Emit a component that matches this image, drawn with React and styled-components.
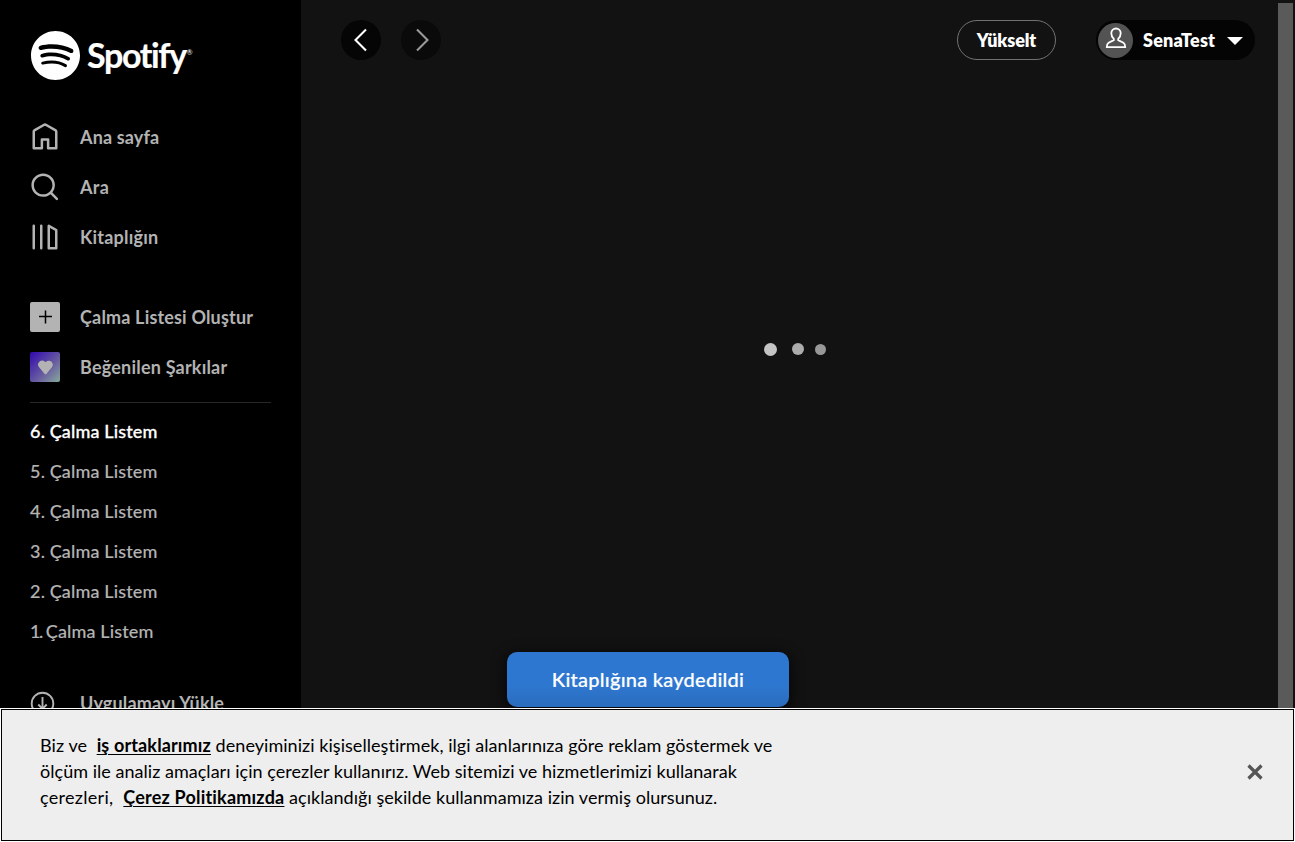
import React from "react";
import styled, { createGlobalStyle } from "styled-components";

const Global = createGlobalStyle`
  * { box-sizing: border-box; }
  body {
    margin: 0;
    background: #000;
    overflow: hidden;
    font-family: Lato, "Liberation Sans", sans-serif;
    font-variant-ligatures: none;
  }
  button { font-variant-ligatures: none; }
`;

const Page = styled.div`
  display: grid;
  grid-template-columns: 301px 1fr;
  grid-template-rows: 708px 134px;
  width: 1295px;
  height: 842px;
  overflow: hidden;
`;

const Sidebar = styled.aside`
  display: flex;
  flex-direction: column;
  min-height: 0;
  overflow: hidden;
  background: #000;
  padding: 31px 30px 0;
`;

const Text = styled.span`
  white-space: pre;
  letter-spacing: ${(p) => p.$ls || 0}px;
`;

const Brand = styled.div`
  display: flex;
  align-items: center;
  height: 49px;
  padding-left: 1px;
  margin-bottom: 42px;
  color: #fff;
`;

const Wordmark = styled.span`
  margin: -2px 0 0 7px;
  font-size: 34px;
  line-height: 40px;
  font-weight: 700;
  letter-spacing: -1.35px;
  -webkit-text-stroke: 0.2px currentColor;
`;

const Registered = styled.span`
  font-size: 7px;
  margin: -7px 0 0 1px;
`;

const NavList = styled.nav`
  display: flex;
  flex-direction: column;
  margin-bottom: ${(p) => p.$after || 0}px;
`;

const NavItem = styled.a`
  display: flex;
  align-items: center;
  gap: 20px;
  height: 50px;
  padding-bottom: 20px;
  color: #b3b3b3;
  font-size: 18px;
  font-weight: 700;
  svg { flex: none; }
`;

const Tile = styled.span`
  display: grid;
  place-items: center;
  flex: none;
  width: 30px;
  height: 30px;
  border-radius: 2px;
  background: ${(p) => p.$bg};
`;

const Divider = styled.hr`
  width: 241px;
  height: 1px;
  margin: 0 0 8px;
  border: 0;
  background: #282828;
  flex: none;
`;

const Playlist = styled.a`
  height: 40px;
  line-height: 40px;
  flex: none;
  font-size: 18px;
  font-weight: 500;
  -webkit-text-stroke: ${(p) => (p.$active ? 0.3 : 0.15)}px currentColor;
  color: ${(p) => (p.$active ? "#fff" : "#b3b3b3")};
`;

const Install = styled.a`
  display: flex;
  align-items: center;
  gap: 25px;
  flex: none;
  height: 30px;
  margin-top: 37px;
  color: #b3b3b3;
  font-size: 18px;
  font-weight: 700;
`;

const Main = styled.main`
  display: grid;
  grid-template-columns: 977px 15px 2px;
  min-height: 0;
  background: #121212;
`;

const Content = styled.section`
  display: flex;
  flex-direction: column;
  align-items: center;
`;

const ScrollThumb = styled.div`
  margin-top: 3px;
  background: #5a5a5a;
`;

const TopBar = styled.header`
  display: flex;
  align-items: center;
  align-self: stretch;
  height: 80px;
  padding: 0 23px 0 40px;
`;

const RoundButton = styled.button`
  display: grid;
  place-items: center;
  width: 40px;
  height: 40px;
  margin-right: 20px;
  padding: 0;
  border: 0;
  border-radius: 50%;
  background: ${(p) => (p.$dim ? "#0a0a0a" : "#050505")};
  color: ${(p) => (p.$dim ? "#9a9a9a" : "#fff")};
`;

const Upgrade = styled.button`
  width: 99px;
  height: 40px;
  margin-left: auto;
  padding: 0 0 1px;
  border: 1px solid #727272;
  border-radius: 20px;
  background: transparent;
  color: #fff;
  font-family: Lato, sans-serif;
  font-weight: 800;
  font-size: 18px;
`;

const UserMenu = styled.button`
  display: flex;
  align-items: center;
  width: 159px;
  height: 40px;
  margin-left: 40px;
  padding: 0 12px 0 2px;
  border: 0;
  border-radius: 20px;
  background: #040404;
  color: #fff;
  font-family: Lato, sans-serif;
  font-weight: 800;
  font-size: 18px;
`;

const Avatar = styled.span`
  display: grid;
  place-items: center;
  width: 35px;
  height: 35px;
  margin-right: 10px;
  padding-bottom: 4px;
  border-radius: 50%;
  background: #535353;
`;

const Caret = styled.svg`
  margin: 1px 0 0 auto;
`;

const Loader = styled.div`
  display: flex;
  align-items: center;
  height: 14px;
  margin-top: 262px;
  margin-left: 11px;
`;

const Dot = styled.span`
  width: ${(p) => p.$size}px;
  height: ${(p) => p.$size}px;
  margin-right: ${(p) => p.$gap || 0}px;
  border-radius: 50%;
  background: ${(p) => p.$color};
`;

const Toast = styled.div`
  position: absolute;
  left: 507px;
  top: 652px;
  display: grid;
  place-items: center;
  width: 282px;
  height: 55px;
  padding-bottom: 1px;
  border-radius: 10px;
  background: linear-gradient(#2e77d0 60%, #2a6cbd);
  box-shadow: 0 4px 12px 4px rgba(0, 0, 0, 0.5);
  color: #fff;
  font-size: 20px;
  font-weight: 500;
  -webkit-text-stroke: 0.2px currentColor;
`;

const CookieBanner = styled.section`
  position: relative;
  grid-column: 1 / -1;
  display: flex;
  align-items: center;
  justify-content: space-between;
  margin: 1px;
  padding: 0 30px 7px 38px;
  border: 1px solid #000;
  outline: 1px solid #fff;
  background: #eee;
  color: #000;
`;

const CookieText = styled.p`
  margin: 0 0 2px;
  font-size: 18px;
  line-height: 26px;
`;

const Line = styled.span`
  display: block;
  white-space: pre;
`;

const CookieLink = styled.a`
  font-weight: 700;
  letter-spacing: ${(p) => p.$ls}px;
  text-decoration: underline;
  text-decoration-thickness: 1px;
  text-underline-offset: 2px;
`;

const CloseIcon = styled.svg`
  display: block;
  margin-top: 1px;
`;

const Icon = ({ d, size = 30, box = 24 }) => (
  <svg width={size} height={size} viewBox={`0 0 ${box} ${box}`} fill="currentColor">
    <path d={d} />
  </svg>
);

const paths = {
  logo: "M12 0C5.4 0 0 5.4 0 12s5.4 12 12 12 12-5.4 12-12S18.66 0 12 0zm5.521 17.34c-.24.359-.66.48-1.021.24-2.82-1.74-6.36-2.101-10.561-1.141-.418.122-.779-.179-.899-.539-.12-.421.18-.78.54-.9 4.56-1.021 8.52-.6 11.64 1.32.42.18.479.659.301 1.02zm1.44-3.3c-.301.42-.841.6-1.262.3-3.239-1.98-8.159-2.58-11.939-1.38-.479.12-1.02-.12-1.14-.6-.12-.48.12-1.021.6-1.141C9.6 9.9 15 10.561 18.72 12.84c.361.181.54.78.241 1.2zm.12-3.36C15.24 8.4 8.82 8.16 5.16 9.301c-.6.179-1.2-.181-1.38-.721-.18-.601.18-1.2.72-1.381 4.26-1.26 11.28-1.02 15.721 1.621.539.3.719 1.02.419 1.56-.299.421-1.02.599-1.559.3z",
  home: "M12.5 3.247a1 1 0 00-1 0L4 7.577V20h4.5v-6a1 1 0 011-1h5a1 1 0 011 1v6H20V7.577l-7.5-4.33zm-2-1.732a3 3 0 013 0l7.5 4.33a2 2 0 011 1.732V21a1 1 0 01-1 1h-6.5a1 1 0 01-1-1v-6h-3v6a1 1 0 01-1 1H3a1 1 0 01-1-1V7.577a2 2 0 011-1.732l7.5-4.33z",
  search: "M10.533 1.279c-5.18 0-9.407 4.14-9.407 9.279s4.226 9.279 9.407 9.279c2.234 0 4.29-.77 5.907-2.058l4.353 4.353a1 1 0 101.414-1.414l-4.344-4.344a9.157 9.157 0 002.077-5.816c0-5.14-4.226-9.28-9.407-9.28zm-7.407 9.279c0-4.006 3.302-7.28 7.407-7.28s7.407 3.274 7.407 7.28-3.302 7.279-7.407 7.279-7.407-3.273-7.407-7.28z",
  library: "M14.5 2.134a1 1 0 011 0l6 3.464a1 1 0 01.5.866V21a1 1 0 01-1 1h-6a1 1 0 01-1-1V3a1 1 0 01.5-.866zM16 4.732V20h4V7.041l-4-2.309zM3 22a1 1 0 01-1-1V3a1 1 0 012 0v18a1 1 0 01-1 1zm6 0a1 1 0 01-1-1V3a1 1 0 012 0v18a1 1 0 01-1 1z",
  heart: "M15.724 4.22A4.313 4.313 0 0012.192.814a4.269 4.269 0 00-3.622 1.13.837.837 0 01-1.14 0 4.272 4.272 0 00-6.21 5.855l5.916 7.05a1.128 1.128 0 001.727 0l5.916-7.05a4.228 4.228 0 00.945-3.577z",
};

export default function App() {
  return (
    <Page>
      <Global />
      <Sidebar>
        <Brand>
          <Icon d={paths.logo} size={49} />
          <Wordmark>Spotify</Wordmark>
          <Registered>®</Registered>
        </Brand>
        <NavList $after={30}>
          <NavItem><Icon d={paths.home} /><Text $ls={0.15}>Ana sayfa</Text></NavItem>
          <NavItem><Icon d={paths.search} /><Text $ls={0.3}>Ara</Text></NavItem>
          <NavItem><Icon d={paths.library} /><Text $ls={0.22}>Kitaplığın</Text></NavItem>
        </NavList>
        <NavList>
          <NavItem>
            <Tile $bg="#b3b3b3">
              <svg width="16" height="16" viewBox="0 0 16 16" stroke="#000" strokeWidth="1.5">
                <path d="M8.5 1.5v13M2 7.500h13" />
              </svg>
            </Tile>
            <Text $ls={0.17}>Çalma Listesi Oluştur</Text>
          </NavItem>
          <NavItem>
            <Tile $bg="linear-gradient(135deg,#3108ae,#6a5fa0 60%,#87ab9c)">
              <Icon d={paths.heart} size={15} box={16} />
            </Tile>
            <Text $ls={0.2}>Beğenilen Şarkılar</Text>
          </NavItem>
        </NavList>
        <Divider />
        {[6, 5, 4, 3, 2, 1].map((n) => (
          <Playlist key={n} $active={n === 6}>
            <Text $ls={n === 1 ? -1.5 : 0.2}>{n}</Text>
            <Text $ls={n === 1 ? -1 : 0.14}>{". "}</Text>
            <Text $ls={0.14}>Çalma Listem</Text>
          </Playlist>
        ))}
        <Install>
          <svg width="25" height="25" viewBox="0 0 25 25" fill="none" stroke="currentColor" strokeWidth="1.9">
            <circle cx="12.5" cy="12.5" r="10.8" />
            <path d="M12.5 6v12M8.3 13.5l4.2 4.4 4.2-4.4" />
          </svg>
          <Text $ls={0.17}>Uygulamayı Yükle</Text>
        </Install>
      </Sidebar>
      <Main>
        <Content>
          <TopBar>
            <RoundButton>
              <svg width="24" height="24" viewBox="0 0 24 24" fill="none" stroke="currentColor" strokeWidth="2.1">
                <path d="M17 1.5L6.5 12 17 22.5" />
              </svg>
            </RoundButton>
            <RoundButton $dim>
              <svg width="24" height="24" viewBox="0 0 24 24" fill="none" stroke="currentColor" strokeWidth="2.1">
                <path d="M8 1.5L18.5 12 8 22.5" />
              </svg>
            </RoundButton>
            <Upgrade><Text $ls={-0.1}>Yükselt</Text></Upgrade>
            <UserMenu>
              <Avatar>
                <svg width="22" height="22" viewBox="0 0 22 22" fill="none" stroke="#fff" strokeWidth="1.8">
                  <path d="M8.8 11.8C7.200 10.200 6.300 8.500 6.300 6.200a4.700 4.700 0 019.400 0c0 2.300-.9 4-2.500 5.600v1.300l5.200 2.700c1.200.7 1.800 2 1.800 4.300H1.800c0-2.300.6-3.600 1.800-4.300l5.200-2.700z" />
                </svg>
              </Avatar>
              <Text $ls={0.2}>SenaTest</Text>
              <Caret width="16" height="8" viewBox="0 0 16 8" fill="#fff"><path d="M0 0h16L8 8z" /></Caret>
            </UserMenu>
          </TopBar>
          <Loader>
            <Dot $size={13} $gap={15} $color="#c4c4c4" />
            <Dot $size={12} $gap={11} $color="#acacac" />
            <Dot $size={11} $color="#989898" />
          </Loader>
        </Content>
        <ScrollThumb />
      </Main>
      <Toast><Text $ls={0.25}>Kitaplığına kaydedildi</Text></Toast>
      <CookieBanner>
        <CookieText>
          <Line>
            <Text $ls={0.1}>{"Biz ve  "}</Text>
            <CookieLink $ls={0.14}>iş ortaklarımız</CookieLink>
            <Text $ls={0.045}> deneyiminizi kişiselleştirmek, ilgi alanlarınıza göre reklam göstermek ve</Text>
          </Line>
          <Line>
            <Text $ls={0.03}>ölçüm ile analiz amaçları için çerezler kullanırız. Web sitemizi ve hizmetlerimizi kullanarak</Text>
          </Line>
          <Line>
            <Text $ls={0.3}>{"çerezleri,  "}</Text>
            <CookieLink $ls={0.2}>Çerez Politikamızda</CookieLink>
            <Text $ls={0.035}> açıklandığı şekilde kullanmamıza izin vermiş olursunuz.</Text>
          </Line>
        </CookieText>
        <CloseIcon width="16" height="16" viewBox="0 0 16 16" stroke="#555" strokeWidth="3.2">
          <path d="M1.500 1.500l13 13M14.500 1.500l-13 13" />
        </CloseIcon>
      </CookieBanner>
    </Page>
  );
}
